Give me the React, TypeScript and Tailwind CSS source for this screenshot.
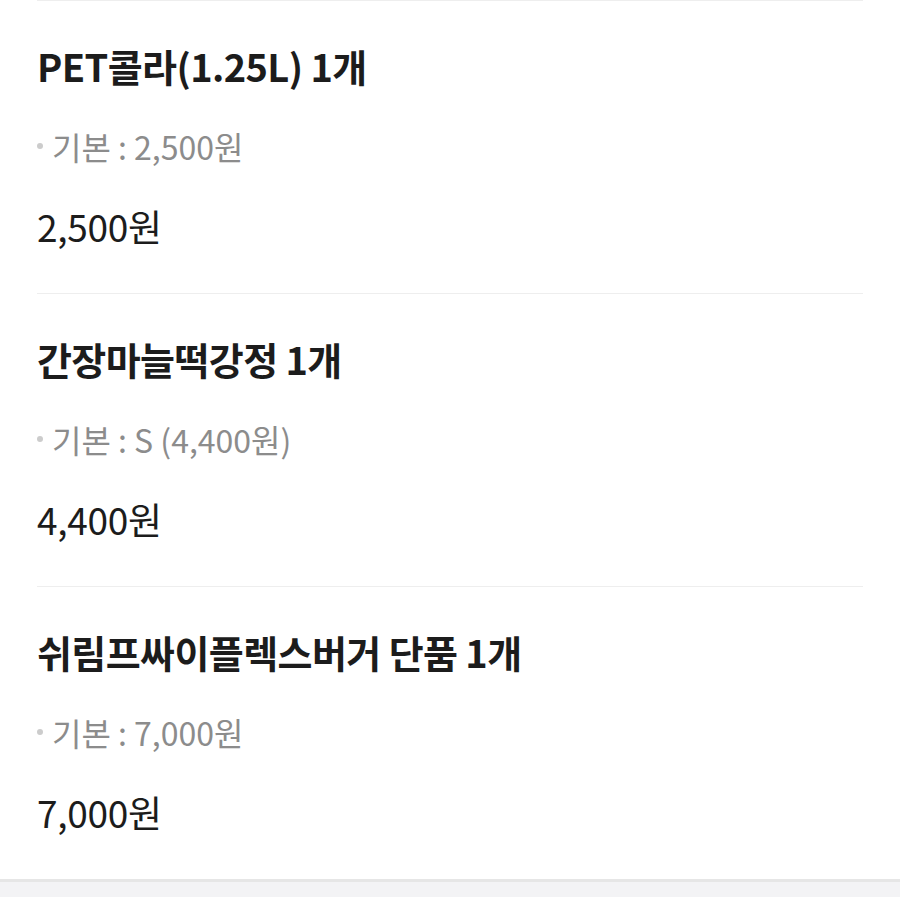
import React from 'react';

type OrderItem = {
  id: number;
  name: string;
  option: string;
  price: string;
};

const items: OrderItem[] = [
  { id: 1, name: 'PET콜라(1.25L) 1개', option: '기본 : 2,500원', price: '2,500원' },
  { id: 2, name: '간장마늘떡강정 1개', option: '기본 : S (4,400원)', price: '4,400원' },
  { id: 3, name: '쉬림프싸이플렉스버거 단품 1개', option: '기본 : 7,000원', price: '7,000원' },
];

const App: React.FC = () => {
  return (
    <div
      className="min-h-screen bg-white"
      style={{ fontFamily: '"Noto Sans CJK KR", "Noto Sans", sans-serif' }}
    >
      <div className="px-[37px]">
        {items.map((item) => (
          <div key={item.id} className="border-t border-[#eeeeee] pt-[25px] pb-[27px]">
            {/* Name */}
            <div className="h-[80px] flex items-center">
              <h3 className="text-[38px] font-bold text-[#1c1c1c] tracking-[-0.6px] leading-none">
                {item.name}
              </h3>
            </div>

            {/* Option */}
            <div className="h-[80px] flex items-center">
              <span className="w-[6px] h-[6px] rounded-full bg-[#cccccc] mr-[9px]" />
              <span className="text-[32px] text-[#8c8c8c] leading-none">
                {item.option}
              </span>
            </div>

            {/* Price */}
            <div className="h-[80px] flex items-center">
              <span className="text-[37px] text-[#1c1c1c] tracking-[-0.3px] leading-none">
                {item.price}
              </span>
            </div>
          </div>
        ))}
      </div>

      {/* Bottom band */}
      <div className="border-t-[3px] border-[#e6e6e6] bg-[#f3f3f5] h-[40px]" />
    </div>
  );
};

export default App;
